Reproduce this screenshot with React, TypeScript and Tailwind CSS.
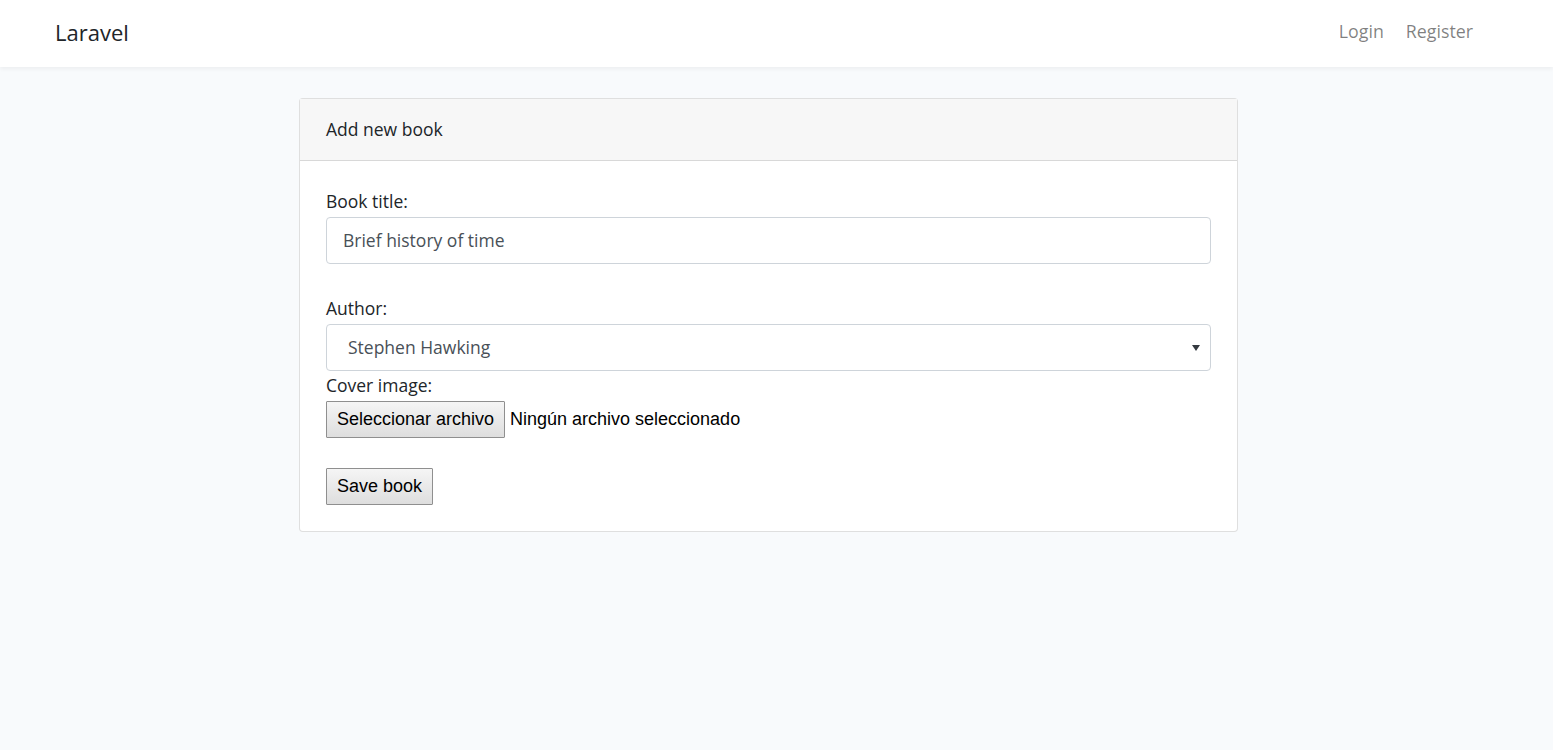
import React from "react";

const navLinks = [
  { href: "#login", label: "Login" },
  { href: "#register", label: "Register" },
];

const App: React.FC = () => {
  return (
    <div className="min-h-[750px] bg-[#f8fafc] font-['Open_Sans','Noto_Sans',sans-serif] text-[#212529]">
      {/* Navbar */}
      <nav className="h-[67px] bg-white shadow-[0_2px_4px_rgba(0,0,0,0.05)] flex items-center justify-between pl-[55px] pr-[80px]">
        <a href="#home" className="text-[22px] text-[#212529] leading-none -mt-[3px]">
          Laravel
        </a>
        <div className="flex items-center gap-[22px] text-[17.8px] text-black/50 -mt-[5px]">
          {navLinks.map((link) => (
            <a key={link.href} href={link.href} className="hover:text-black/70">
              {link.label}
            </a>
          ))}
        </div>
      </nav>

      {/* Card */}
      <div className="pt-[31px]">
        <div className="w-[939px] ml-[299px] bg-white border border-black/[0.125] rounded-[4px]">
          <div className="h-[62px] bg-[#f7f7f7] border-b border-black/[0.125] flex items-center px-[26px] text-[17.5px]">
            Add new book
          </div>

          <div className="px-[26px] pt-[28px] pb-[26px] text-[17.5px]">
            <label className="block leading-[24px] mb-[4px]">Book title:</label>
            <div className="h-[47px] border border-[#ced4da] rounded-[4px] flex items-center px-[16px] text-[#495057]">
              Brief history of time
            </div>

            <label className="block leading-[24px] mt-[32px] mb-[4px]">Author:</label>
            <div className="h-[47px] border border-[#ced4da] rounded-[4px] flex items-center justify-between pl-[21px] pr-[10px] text-[#495057]">
              <span>Stephen Hawking</span>
              <svg width="8" height="8" viewBox="0 0 8 8" className="text-[#343a40]">
                <path d="M0 1h8L4 7z" fill="currentColor" />
              </svg>
            </div>

            <label className="block leading-[24px] mt-[2px] mb-[4px]">Cover image:</label>
            <div className="flex items-center gap-[5px] font-['Liberation_Sans',Arial,sans-serif] text-[18px]">
              <button className="h-[37px] w-[179px] border border-[#8f8f8f] rounded-[1px] bg-gradient-to-b from-[#f5f5f5] to-[#dedede] text-black">
                Seleccionar archivo
              </button>
              <span className="text-black">Ningún archivo seleccionado</span>
            </div>

            <button className="mt-[30px] h-[37px] w-[107px] border border-[#8f8f8f] rounded-[1px] bg-gradient-to-b from-[#f5f5f5] to-[#dedede] text-black font-['Liberation_Sans',Arial,sans-serif] text-[18px]">
              Save book
            </button>
          </div>
        </div>
      </div>
    </div>
  );
};

export default App;
